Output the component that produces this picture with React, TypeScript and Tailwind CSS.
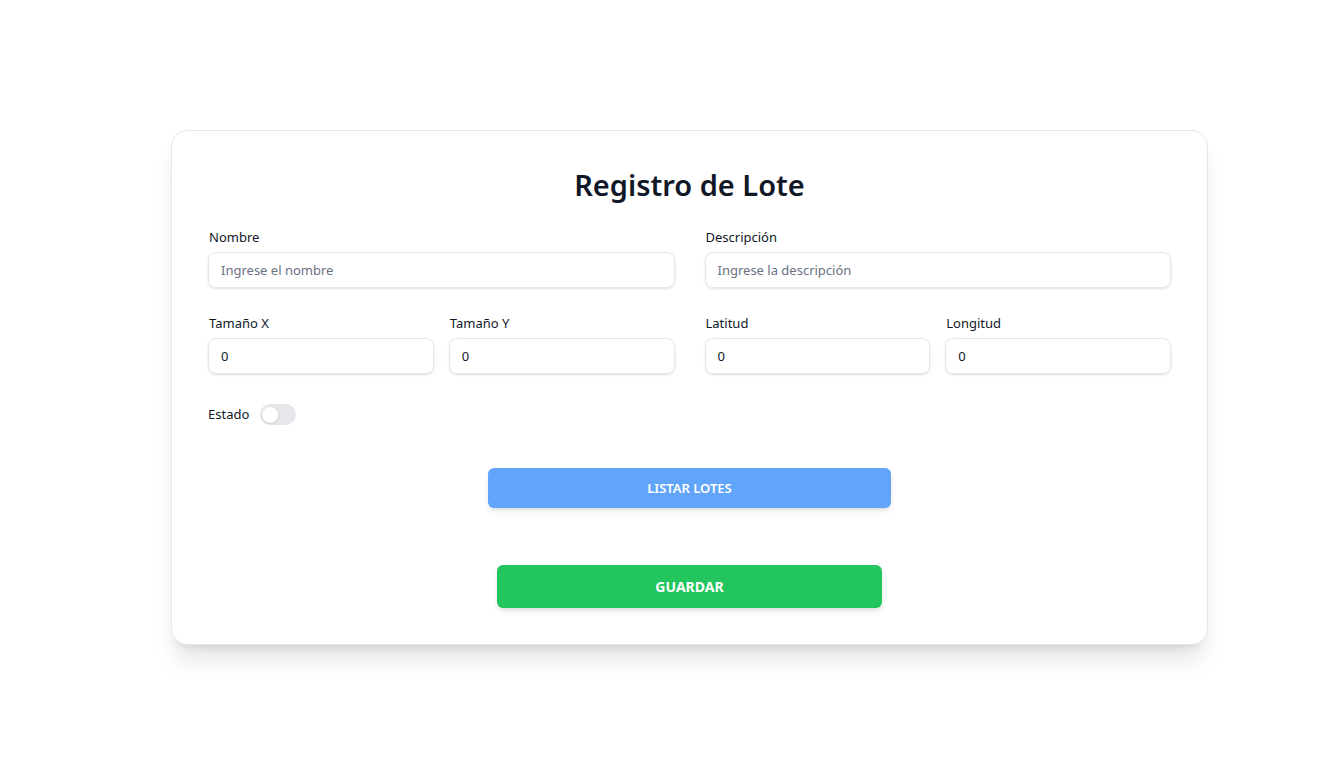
function Field({ label, placeholder, value }: { label: string; placeholder?: string; value?: string }) {
  return (
    <div className="flex flex-col">
      <label className="text-[13px] leading-5 text-gray-900 pl-px mb-[5px]">{label}</label>
      <input
        className="h-9 w-full rounded-lg border border-gray-200 px-3 text-[13px] text-gray-900 shadow-sm placeholder:text-gray-500 outline-none"
        placeholder={placeholder}
        defaultValue={value}
      />
    </div>
  );
}

export default function App() {
  return (
    <div
      className="min-h-screen bg-white pt-[130px] pl-[171px]"
      style={{ fontFamily: '"Noto Sans", "Open Sans", sans-serif' }}
    >
      <div className="w-[1037px] h-[515px] rounded-2xl border border-gray-200 bg-white shadow-xl px-9 pt-9">
        <h1 className="text-center text-[29px] leading-9 font-semibold text-gray-900 mb-6">Registro de Lote</h1>

        <div className="grid grid-cols-2 gap-x-[30px] gap-y-[25px]">
          <Field label="Nombre" placeholder="Ingrese el nombre" />
          <Field label="Descripción" placeholder="Ingrese la descripción" />
          <div className="grid grid-cols-2 gap-x-[15px]">
            <Field label="Tamaño X" value="0" />
            <Field label="Tamaño Y" value="0" />
          </div>
          <div className="grid grid-cols-2 gap-x-[15px]">
            <Field label="Latitud" value="0" />
            <Field label="Longitud" value="0" />
          </div>
        </div>

        <div className="mt-[30px] flex items-center gap-[11px]">
          <span className="text-[13px] text-gray-900">Estado</span>
          <div className="w-9 h-[21px] rounded-full bg-gray-200 flex items-center px-0.5">
            <div className="w-4 h-4 rounded-full bg-white shadow-sm" />
          </div>
        </div>

        <div className="mt-[43px] flex justify-center">
          <button className="w-[403px] h-10 pt-px rounded-md bg-[#60a5fa] text-white text-[13px] font-semibold shadow-md">
            LISTAR LOTES
          </button>
        </div>

        <div className="mt-[57px] flex justify-center">
          <button className="w-[385px] h-[43px] rounded-md bg-[#22c55e] text-white text-sm font-bold shadow-md">
            GUARDAR
          </button>
        </div>
      </div>
    </div>
  );
}
